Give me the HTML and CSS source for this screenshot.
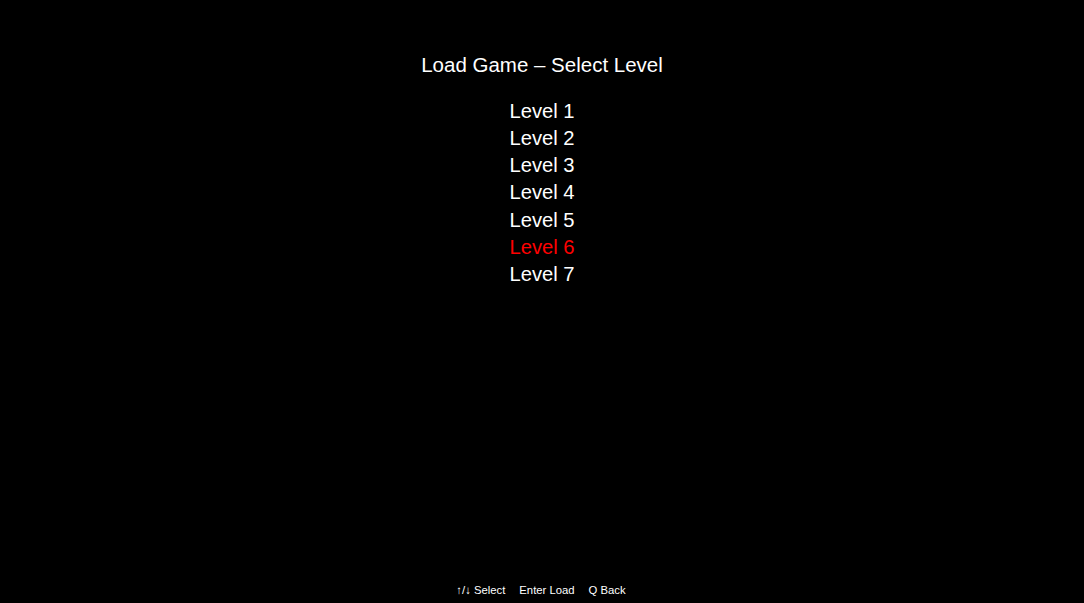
FILE: index.html
```html
<!DOCTYPE html>
<html lang="en">
<head>
  <meta charset="UTF-8" />
  <meta name="viewport" content="width=device-width, initial-scale=1.0"/>
  <title>Load Game</title>
  <link rel="stylesheet" href="styles.css">
</head>
<body>

  <div class="screen">
    <h1 class="title">Load Game – Select Level</h1>

    <ul class="levels">
      <li>Level 1</li>
      <li>Level 2</li>
      <li>Level 3</li>
      <li>Level 4</li>
      <li>Level 5</li>
      <li class="selected">Level 6</li>
      <li>Level 7</li>
    </ul>

    <div class="hints">
      <span>↑/↓ Select</span>
      <span>Enter Load</span>
      <span>Q Back</span>
    </div>
  </div>

</body>
</html>
```

FILE: styles.css
```css
* {
  box-sizing: border-box;
}

body {
  margin: 0;
  padding: 0;
  background: #000;
  color: #fff;
  font-family: "Liberation Sans", Arial, sans-serif;
}

.screen {
  height: 603px;
  display: flex;
  flex-direction: column;
  align-items: center;
  padding-top: 51px;
}

.title {
  margin: 0;
  font-size: 20.5px;
  font-weight: normal;
  line-height: 27px;
}

.levels {
  list-style: none;
  margin: 20px 0 0;
  padding: 0;
  text-align: center;
  font-size: 20.2px;
  line-height: 27.15px;
}

.selected {
  color: #ff0000;
}

.hints {
  margin-top: auto;
  margin-right: 2px;
  padding-bottom: 6px;
  display: flex;
  gap: 14px;
  font-size: 11.3px;
  line-height: 14px;
}
```
